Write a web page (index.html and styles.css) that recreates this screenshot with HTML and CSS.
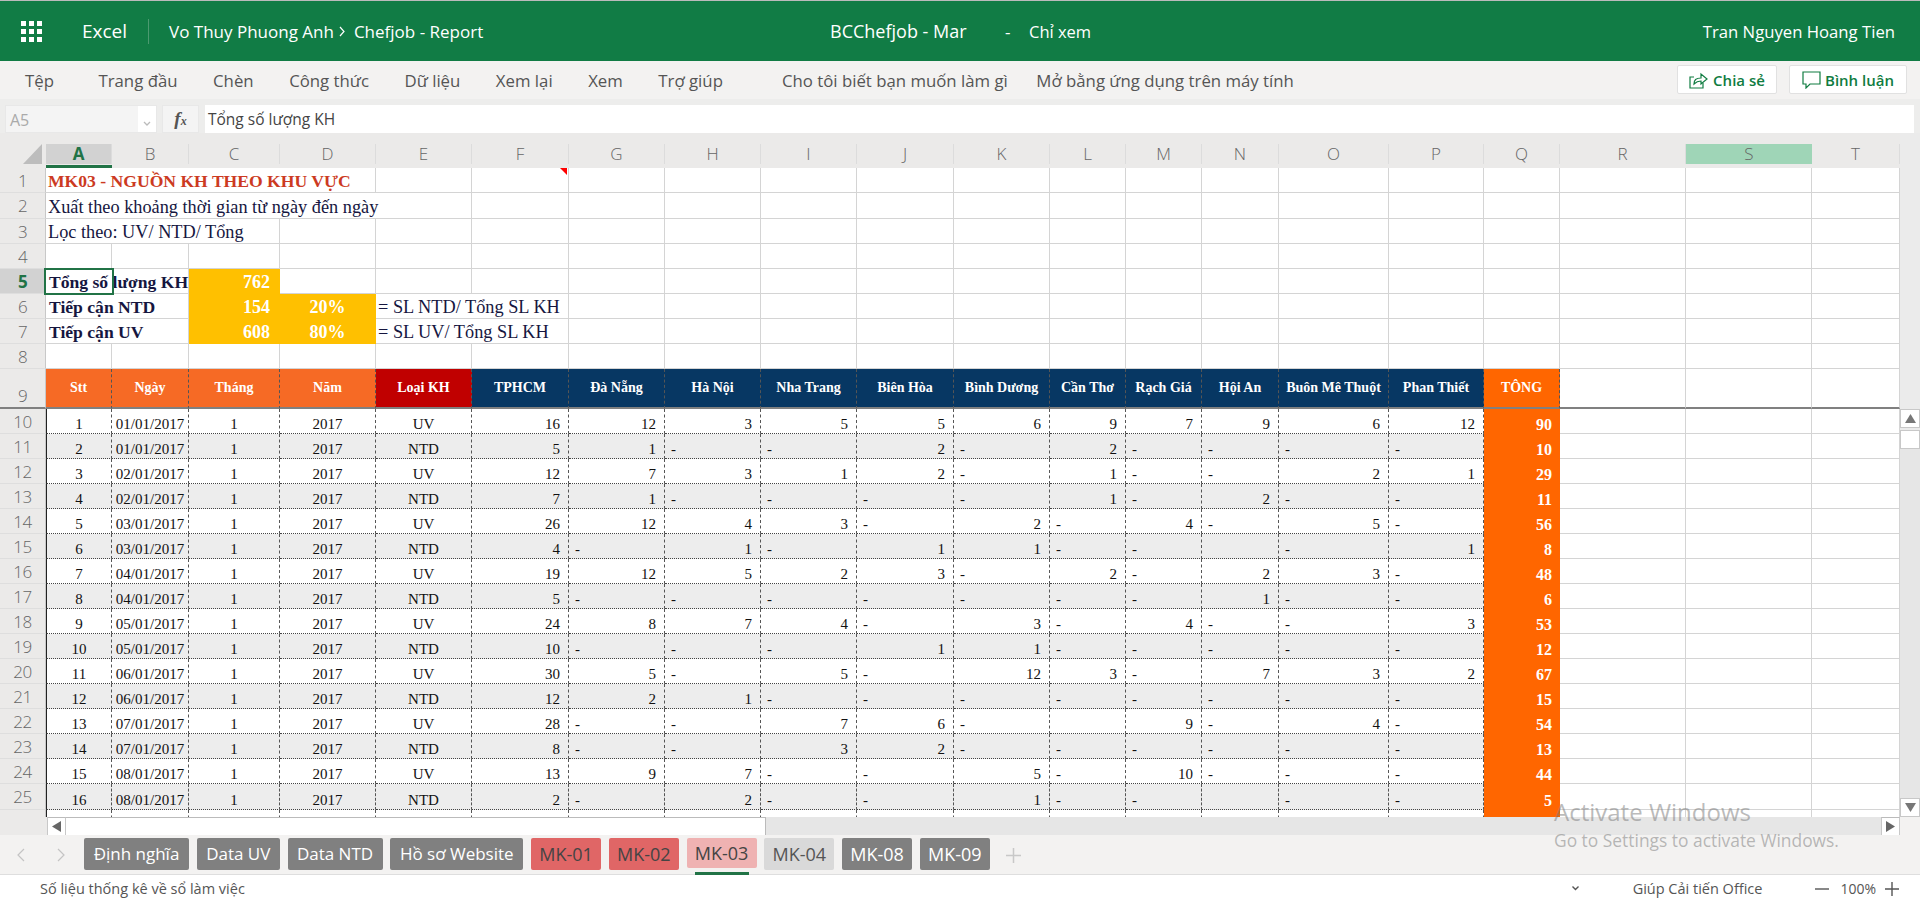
FILE: index.html
```html
<!DOCTYPE html>
<html lang="vi">
<head>
  <meta charset="UTF-8">
  <title>BCChefjob - Mar</title>
  <link rel="stylesheet" href="styles.css">
</head>
<body>
  <header class="titlebar">
    <svg class="waffle" width="21" height="21" viewBox="0 0 21 21" fill="#fff">
      <rect x="0" y="0" width="5" height="5"/><rect x="8" y="0" width="5" height="5"/><rect x="16" y="0" width="5" height="5"/>
      <rect x="0" y="8" width="5" height="5"/><rect x="8" y="8" width="5" height="5"/><rect x="16" y="8" width="5" height="5"/>
      <rect x="0" y="16" width="5" height="5"/><rect x="8" y="16" width="5" height="5"/><rect x="16" y="16" width="5" height="5"/>
    </svg>
    <span class="app-name">Excel</span>
    <span class="crumbs">Vo Thuy Phuong Anh</span>
    <svg class="crumb-sep" width="7" height="11" viewBox="0 0 7 11" fill="none" stroke="#fff" stroke-width="1.2"><path d="M1 1l4 4.5L1 10"/></svg>
    <span class="crumbs">Chefjob - Report</span>
    <span class="doc-name">BCChefjob - Mar</span>
    <span class="doc-dash">-</span>
    <span class="doc-mode">Chỉ xem</span>
    <span class="user-name">Tran Nguyen Hoang Tien</span>
  </header>

  <nav class="ribbon">
    <span class="tab-tep">Tệp</span>
    <span>Trang đầu</span>
    <span>Chèn</span>
    <span>Công thức</span>
    <span>Dữ liệu</span>
    <span>Xem lại</span>
    <span>Xem</span>
    <span class="tab-help">Trợ giúp</span>
    <span class="tab-tell">Cho tôi biết bạn muốn làm gì</span>
    <span>Mở bằng ứng dụng trên máy tính</span>
    <button class="rb-btn btn-share">
      <svg width="20" height="18" viewBox="0 0 20 18" fill="none" stroke="#107c41" stroke-width="1.2"><path d="M5 6H1v11h13v-5"/><path d="M5 13c0-4 2-6 7-6V3l6 5-6 5V10c-3 0-5 1-7 3z"/></svg>
      Chia sẻ
    </button>
    <button class="rb-btn btn-comment">
      <svg width="19" height="18" viewBox="0 0 19 18" fill="none" stroke="#107c41" stroke-width="1.2"><path d="M1 1h17v12H8l-4 4v-4H1z"/></svg>
      Bình luận
    </button>
  </nav>

  <div class="formula-bar">
    <div class="name-box"><span>A5</span><span class="name-drop"><svg width="8" height="5" viewBox="0 0 8 5" fill="none" stroke="#bbb" stroke-width="1.3"><path d="M1 1l3 3 3-3"/></svg></span></div>
    <div class="fx-box"><i>f</i><i class="fx-x">x</i></div>
    <div class="formula-input">Tổng số lượng KH</div>
  </div>

  <div class="sheet-row">
    <div class="sheet-wrap">
      <table class="sheet">
        <colgroup>
          <col class="c-rh"><col class="c66"><col class="c77"><col class="c91"><col class="c96"><col class="c96"><col class="c97"><col class="c96"><col class="c96"><col class="c96"><col class="c97"><col class="c96"><col class="c76"><col class="c76"><col class="c77"><col class="c110"><col class="c95"><col class="c76"><col class="c126"><col class="c126"><col class="c88">
        </colgroup>
        <thead>
          <tr class="r-cols">
            <th class="corner"><svg width="19" height="20" viewBox="0 0 19 20"><path d="M19 0v20H0z" fill="#bdbdbd"/></svg></th>
            <th class="col-on"><div>A</div></th><th><div>B</div></th><th><div>C</div></th><th><div>D</div></th><th><div>E</div></th><th><div>F</div></th><th><div>G</div></th><th><div>H</div></th><th><div>I</div></th><th><div>J</div></th><th><div>K</div></th><th><div>L</div></th><th><div>M</div></th><th><div>N</div></th><th><div>O</div></th><th><div>P</div></th><th><div>Q</div></th><th><div>R</div></th><th class="col-hover"><div>S</div></th><th><div>T</div></th>
          </tr>
        </thead>
        <tbody>
          <tr class="r-top">
            <th class="rh">1</th><td colspan="4" class="title-cell">MK03 - NGUỒN KH THEO KHU VỰC</td><td></td><td class="has-note"><span class="note-mark"></span></td><td></td><td></td><td></td><td></td><td></td><td></td><td></td><td></td><td></td><td></td><td></td><td></td><td></td><td></td>
          </tr>
          <tr class="r-top r26">
            <th class="rh">2</th><td colspan="5" class="note-text">Xuất theo khoảng thời gian từ ngày đến ngày</td><td></td><td></td><td></td><td></td><td></td><td></td><td></td><td></td><td></td><td></td><td></td><td></td><td></td><td></td><td></td>
          </tr>
          <tr class="r-top">
            <th class="rh">3</th><td colspan="3" class="note-text">Lọc theo: UV/ NTD/ Tổng</td><td></td><td></td><td></td><td></td><td></td><td></td><td></td><td></td><td></td><td></td><td></td><td></td><td></td><td></td><td></td><td></td><td></td>
          </tr>
          <tr class="r-top">
            <th class="rh">4</th><td></td><td></td><td></td><td></td><td></td><td></td><td></td><td></td><td></td><td></td><td></td><td></td><td></td><td></td><td></td><td></td><td></td><td></td><td></td><td></td>
          </tr>
          <tr class="r-top">
            <th class="rh rh-on">5</th><td colspan="2" class="sum-label sel-host"><span class="sel-box"></span>Tổng số lượng KH</td><td class="sum-num">762</td><td></td><td></td><td></td><td></td><td></td><td></td><td></td><td></td><td></td><td></td><td></td><td></td><td></td><td></td><td></td><td></td><td></td>
          </tr>
          <tr class="r-top">
            <th class="rh">6</th><td colspan="2" class="sum-label">Tiếp cận NTD</td><td class="sum-num">154</td><td class="sum-pct">20%</td><td colspan="2" class="note-text">= SL NTD/ Tổng SL KH</td><td></td><td></td><td></td><td></td><td></td><td></td><td></td><td></td><td></td><td></td><td></td><td></td><td></td><td></td>
          </tr>
          <tr class="r-top">
            <th class="rh">7</th><td colspan="2" class="sum-label">Tiếp cận UV</td><td class="sum-num">608</td><td class="sum-pct">80%</td><td colspan="2" class="note-text">= SL UV/ Tổng SL KH</td><td></td><td></td><td></td><td></td><td></td><td></td><td></td><td></td><td></td><td></td><td></td><td></td><td></td><td></td>
          </tr>
          <tr class="r-top">
            <th class="rh">8</th><td></td><td></td><td></td><td></td><td></td><td></td><td></td><td></td><td></td><td></td><td></td><td></td><td></td><td></td><td></td><td></td><td></td><td></td><td></td><td></td>
          </tr>
          <tr class="r-head">
            <th class="rh">9</th><td class="h-orange">Stt</td><td class="h-orange">Ngày</td><td class="h-orange">Tháng</td><td class="h-orange">Năm</td><td class="h-red">Loại KH</td><td class="h-navy">TPHCM</td><td class="h-navy">Đà Nẵng</td><td class="h-navy">Hà Nội</td><td class="h-navy">Nha Trang</td><td class="h-navy">Biên Hòa</td><td class="h-navy">Bình Dương</td><td class="h-navy">Cần Thơ</td><td class="h-navy">Rạch Giá</td><td class="h-navy">Hội An</td><td class="h-navy">Buôn Mê Thuột</td><td class="h-navy">Phan Thiết</td><td class="h-total">TÔNG</td><td></td><td></td><td></td>
          </tr>
          <tr class="r-data">
            <th class="rh">10</th><td class="c first">1</td><td class="c">01/01/2017</td><td class="c">1</td><td class="c">2017</td><td class="c">UV</td><td class="n">16</td><td class="n">12</td><td class="n">3</td><td class="n">5</td><td class="n">5</td><td class="n">6</td><td class="n">9</td><td class="n">7</td><td class="n">9</td><td class="n">6</td><td class="n">12</td><td class="t">90</td><td></td><td></td><td></td>
          </tr>
          <tr class="r-data alt">
            <th class="rh">11</th><td class="c first">2</td><td class="c">01/01/2017</td><td class="c">1</td><td class="c">2017</td><td class="c">NTD</td><td class="n">5</td><td class="n">1</td><td class="d">-</td><td class="d">-</td><td class="n">2</td><td class="d">-</td><td class="n">2</td><td class="d">-</td><td class="d">-</td><td class="d">-</td><td class="d">-</td><td class="t">10</td><td></td><td></td><td></td>
          </tr>
          <tr class="r-data">
            <th class="rh">12</th><td class="c first">3</td><td class="c">02/01/2017</td><td class="c">1</td><td class="c">2017</td><td class="c">UV</td><td class="n">12</td><td class="n">7</td><td class="n">3</td><td class="n">1</td><td class="n">2</td><td class="d">-</td><td class="n">1</td><td class="d">-</td><td class="d">-</td><td class="n">2</td><td class="n">1</td><td class="t">29</td><td></td><td></td><td></td>
          </tr>
          <tr class="r-data alt">
            <th class="rh">13</th><td class="c first">4</td><td class="c">02/01/2017</td><td class="c">1</td><td class="c">2017</td><td class="c">NTD</td><td class="n">7</td><td class="n">1</td><td class="d">-</td><td class="d">-</td><td class="d">-</td><td class="d">-</td><td class="n">1</td><td class="d">-</td><td class="n">2</td><td class="d">-</td><td class="d">-</td><td class="t">11</td><td></td><td></td><td></td>
          </tr>
          <tr class="r-data">
            <th class="rh">14</th><td class="c first">5</td><td class="c">03/01/2017</td><td class="c">1</td><td class="c">2017</td><td class="c">UV</td><td class="n">26</td><td class="n">12</td><td class="n">4</td><td class="n">3</td><td class="d">-</td><td class="n">2</td><td class="d">-</td><td class="n">4</td><td class="d">-</td><td class="n">5</td><td class="d">-</td><td class="t">56</td><td></td><td></td><td></td>
          </tr>
          <tr class="r-data alt">
            <th class="rh">15</th><td class="c first">6</td><td class="c">03/01/2017</td><td class="c">1</td><td class="c">2017</td><td class="c">NTD</td><td class="n">4</td><td class="d">-</td><td class="n">1</td><td class="d">-</td><td class="n">1</td><td class="n">1</td><td class="d">-</td><td class="d">-</td><td class="d"></td><td class="d">-</td><td class="n">1</td><td class="t">8</td><td></td><td></td><td></td>
          </tr>
          <tr class="r-data">
            <th class="rh">16</th><td class="c first">7</td><td class="c">04/01/2017</td><td class="c">1</td><td class="c">2017</td><td class="c">UV</td><td class="n">19</td><td class="n">12</td><td class="n">5</td><td class="n">2</td><td class="n">3</td><td class="d">-</td><td class="n">2</td><td class="d">-</td><td class="n">2</td><td class="n">3</td><td class="d">-</td><td class="t">48</td><td></td><td></td><td></td>
          </tr>
          <tr class="r-data alt">
            <th class="rh">17</th><td class="c first">8</td><td class="c">04/01/2017</td><td class="c">1</td><td class="c">2017</td><td class="c">NTD</td><td class="n">5</td><td class="d">-</td><td class="d">-</td><td class="d">-</td><td class="d">-</td><td class="d">-</td><td class="d">-</td><td class="d">-</td><td class="n">1</td><td class="d">-</td><td class="d">-</td><td class="t">6</td><td></td><td></td><td></td>
          </tr>
          <tr class="r-data">
            <th class="rh">18</th><td class="c first">9</td><td class="c">05/01/2017</td><td class="c">1</td><td class="c">2017</td><td class="c">UV</td><td class="n">24</td><td class="n">8</td><td class="n">7</td><td class="n">4</td><td class="d">-</td><td class="n">3</td><td class="d">-</td><td class="n">4</td><td class="d">-</td><td class="d">-</td><td class="n">3</td><td class="t">53</td><td></td><td></td><td></td>
          </tr>
          <tr class="r-data alt">
            <th class="rh">19</th><td class="c first">10</td><td class="c">05/01/2017</td><td class="c">1</td><td class="c">2017</td><td class="c">NTD</td><td class="n">10</td><td class="d">-</td><td class="d">-</td><td class="d">-</td><td class="n">1</td><td class="n">1</td><td class="d">-</td><td class="d">-</td><td class="d">-</td><td class="d">-</td><td class="d">-</td><td class="t">12</td><td></td><td></td><td></td>
          </tr>
          <tr class="r-data">
            <th class="rh">20</th><td class="c first">11</td><td class="c">06/01/2017</td><td class="c">1</td><td class="c">2017</td><td class="c">UV</td><td class="n">30</td><td class="n">5</td><td class="d">-</td><td class="n">5</td><td class="d">-</td><td class="n">12</td><td class="n">3</td><td class="d">-</td><td class="n">7</td><td class="n">3</td><td class="n">2</td><td class="t">67</td><td></td><td></td><td></td>
          </tr>
          <tr class="r-data alt">
            <th class="rh">21</th><td class="c first">12</td><td class="c">06/01/2017</td><td class="c">1</td><td class="c">2017</td><td class="c">NTD</td><td class="n">12</td><td class="n">2</td><td class="n">1</td><td class="d">-</td><td class="d">-</td><td class="d">-</td><td class="d">-</td><td class="d">-</td><td class="d">-</td><td class="d">-</td><td class="d">-</td><td class="t">15</td><td></td><td></td><td></td>
          </tr>
          <tr class="r-data">
            <th class="rh">22</th><td class="c first">13</td><td class="c">07/01/2017</td><td class="c">1</td><td class="c">2017</td><td class="c">UV</td><td class="n">28</td><td class="d">-</td><td class="d">-</td><td class="n">7</td><td class="n">6</td><td class="d">-</td><td class="d"></td><td class="n">9</td><td class="d">-</td><td class="n">4</td><td class="d">-</td><td class="t">54</td><td></td><td></td><td></td>
          </tr>
          <tr class="r-data alt">
            <th class="rh">23</th><td class="c first">14</td><td class="c">07/01/2017</td><td class="c">1</td><td class="c">2017</td><td class="c">NTD</td><td class="n">8</td><td class="d">-</td><td class="d">-</td><td class="n">3</td><td class="n">2</td><td class="d">-</td><td class="d">-</td><td class="d">-</td><td class="d">-</td><td class="d">-</td><td class="d">-</td><td class="t">13</td><td></td><td></td><td></td>
          </tr>
          <tr class="r-data">
            <th class="rh">24</th><td class="c first">15</td><td class="c">08/01/2017</td><td class="c">1</td><td class="c">2017</td><td class="c">UV</td><td class="n">13</td><td class="n">9</td><td class="n">7</td><td class="d">-</td><td class="d">-</td><td class="n">5</td><td class="d">-</td><td class="n">10</td><td class="d">-</td><td class="d">-</td><td class="d">-</td><td class="t">44</td><td></td><td></td><td></td>
          </tr>
          <tr class="r-data alt r26">
            <th class="rh">25</th><td class="c first">16</td><td class="c">08/01/2017</td><td class="c">1</td><td class="c">2017</td><td class="c">NTD</td><td class="n">2</td><td class="d">-</td><td class="n">2</td><td class="d">-</td><td class="d">-</td><td class="n">1</td><td class="d">-</td><td class="d">-</td><td class="d"></td><td class="d">-</td><td class="d">-</td><td class="t">5</td><td></td><td></td><td></td>
          </tr>
          <tr class="r-data r-cut">
            <th class="rh"></th><td class="c first"></td><td class="c"></td><td class="c"></td><td class="c"></td><td class="c"></td><td class="n"></td><td class="n"></td><td class="n"></td><td class="n"></td><td class="n"></td><td class="n"></td><td class="n"></td><td class="n"></td><td class="n"></td><td class="n"></td><td class="n"></td><td class="t"></td><td></td><td></td><td></td>
          </tr>
        </tbody>
      </table>
    </div>
    <div class="vscroll">
      <div class="vs-top"></div>
      <div class="sb-btn"><svg width="11" height="9" viewBox="0 0 11 9"><path d="M5.5 0L11 9H0z" fill="#777"/></svg></div>
      <div class="sb-btn vs-thumb"></div>
      <div class="vs-fill"></div>
      <div class="sb-btn"><svg width="11" height="9" viewBox="0 0 11 9"><path d="M0 0h11L5.5 9z" fill="#777"/></svg></div>
    </div>
  </div>

  <div class="hscroll">
    <div class="hs-corner"></div>
    <div class="hs-btn"><svg width="9" height="11" viewBox="0 0 9 11"><path d="M9 0v11L0 5.5z" fill="#666"/></svg></div>
    <div class="hs-thumb"></div>
    <div class="hs-fill"></div>
    <div class="hs-btn"><svg width="9" height="11" viewBox="0 0 9 11"><path d="M0 0l9 5.5L0 11z" fill="#666"/></svg></div>
    <div class="hs-end"></div>
  </div>

  <div class="tabbar">
    <svg class="tab-nav" width="8" height="14" viewBox="0 0 8 14" fill="none" stroke="#c4c4c4" stroke-width="1.2"><path d="M7 1L1 7l6 6"/></svg>
    <svg class="tab-nav tab-nav-next" width="8" height="14" viewBox="0 0 8 14" fill="none" stroke="#c4c4c4" stroke-width="1.2"><path d="M1 1l6 6-6 6"/></svg>
    <span class="stab gray w105">Định nghĩa</span>
    <span class="stab gray w83">Data UV</span>
    <span class="stab gray w95">Data NTD</span>
    <span class="stab gray w133">Hồ sơ Website</span>
    <span class="stab red">MK-01</span>
    <span class="stab red">MK-02</span>
    <span class="stab pink">MK-03</span>
    <span class="stab light">MK-04</span>
    <span class="stab gray">MK-08</span>
    <span class="stab gray">MK-09</span>
    <svg class="tab-add" width="15" height="15" viewBox="0 0 15 15" stroke="#c8c8c8" stroke-width="1.5"><path d="M7.5 0v15M0 7.5h15"/></svg>
  </div>

  <footer class="statusbar">
    <span class="st-left">Số liệu thống kê về sổ làm việc</span>
    <svg class="st-chev" width="7" height="5" viewBox="0 0 7 5" fill="none" stroke="#555" stroke-width="1.4"><path d="M.5.5l3 3 3-3"/></svg>
    <span class="st-help">Giúp Cải tiến Office</span>
    <svg class="st-minus" width="14" height="2" viewBox="0 0 14 2"><path d="M0 1h14" stroke="#555" stroke-width="1.4"/></svg>
    <span class="st-zoom">100%</span>
    <svg class="st-plus" width="14" height="14" viewBox="0 0 14 14" stroke="#555" stroke-width="1.4"><path d="M7 0v14M0 7h14"/></svg>
  </footer>

  <div class="activate">
    <div class="act-big">Activate Windows</div>
    <div class="act-small">Go to Settings to activate Windows.</div>
  </div>
</body>
</html>
```

FILE: styles.css
```css
* {
  box-sizing: border-box;
}
html, body {
  margin: 0;
  height: 902px;
  overflow: hidden;
}
body {
  display: flex;
  flex-direction: column;
  position: relative;
  width: 1920px;
  font-family: "Open Sans", "Noto Sans", sans-serif;
  background: #fff;
}

/* title bar */
.titlebar {
  height: 61px;
  flex: none;
  display: flex;
  align-items: center;
  color: #fff;
  background: #117c45;
  border-top: 1px solid #bbb;
  font-size: 17px;
  white-space: nowrap;
}
.waffle {
  margin-left: 21px;
}
.app-name {
  margin-left: 40px;
  width: 67px;
  height: 25px;
  line-height: 25px;
  font-size: 19px;
  border-right: 1px solid #4b9a70;
}
.crumbs {
  margin-left: 20px;
}
.crumb-sep {
  margin-left: 5px;
  margin-right: -12px;
}
.doc-name {
  position: absolute;
  left: 830px;
  font-size: 18px;
}
.doc-dash {
  position: absolute;
  left: 1005px;
}
.doc-mode {
  position: absolute;
  left: 1029px;
  font-size: 16.5px;
}
.user-name {
  margin-left: auto;
  margin-right: 25px;
  font-size: 16.7px;
}

/* ribbon */
.ribbon {
  height: 38px;
  flex: none;
  display: flex;
  align-items: center;
  gap: 35.5px;
  padding-left: 25px;
  background: #f3f2f1;
  color: #555;
  font-size: 16.8px;
  white-space: nowrap;
}
.tab-tep {
  margin-right: 9px;
}
.tab-help {
  margin-right: 23.5px;
}
.tab-tell {
  margin-right: -7px;
}
.rb-btn {
  display: flex;
  align-items: center;
  justify-content: center;
  gap: 4px;
  height: 29px;
  padding: 0;
  background: #fff;
  border: 1px solid #e1e1e1;
  border-radius: 2px;
  color: #107c41;
  font: 600 15px "Open Sans", sans-serif;
}
.btn-share {
  position: absolute;
  left: 1677px;
  top: 65px;
  width: 100px;
}
.btn-comment {
  position: absolute;
  left: 1789px;
  top: 65px;
  width: 118px;
}

/* formula bar */
.formula-bar {
  height: 34px;
  flex: none;
  display: flex;
  padding: 6px 6px 0 5px;
  background: #ededec;
  font-size: 15.5px;
}
.name-box {
  width: 152px;
  height: 28px;
  display: flex;
  line-height: 28px;
  padding-left: 4px;
  color: #aaa;
  background: #f4f4f4;
  border: 1px solid #e8e8e8;
}
.name-box span:first-child {
  flex: 1;
  font-size: 16px;
}
.name-drop {
  width: 18px;
  background: #fff;
  text-align: center;
}
.fx-box {
  width: 37px;
  height: 28px;
  margin-left: 5px;
  text-align: center;
  color: #555;
  background: #f4f4f4;
  border: 1px solid #e8e8e8;
  font: italic bold 19px/26px "Liberation Serif", serif;
}
.fx-x {
  font-size: 12px;
}
.formula-input {
  flex: 1;
  height: 28px;
  margin-left: 6px;
  padding-left: 3px;
  line-height: 29px;
  color: #444;
  background: #fff;
}

/* sheet */
.sheet-row {
  height: 684px;
  flex: none;
  display: flex;
}
.sheet-wrap {
  width: 1900px;
  height: 684px;
  overflow: hidden;
}
.sheet {
  width: 1900px;
  table-layout: fixed;
  border-collapse: separate;
  border-spacing: 0;
  font-family: "Liberation Serif", serif;
}
.c-rh { width: 46px; }
.c66 { width: 66px; }
.c76 { width: 76px; }
.c77 { width: 77px; }
.c88 { width: 88px; }
.c91 { width: 91px; }
.c95 { width: 95px; }
.c96 { width: 96px; }
.c97 { width: 97px; }
.c110 { width: 110px; }
.c126 { width: 126px; }

/* column letters */
.r-cols th {
  height: 35px;
  padding: 11px 0 0;
  vertical-align: top;
  background: #ebeae9;
  color: #666;
  font: 300 17px "Open Sans", sans-serif;
}
.r-cols th div {
  height: 20px;
  line-height: 20px;
  border-right: 1px solid #dcdcdc;
}
.r-cols .corner {
  padding: 11px 4px 0 23px;
  line-height: 0;
}
.r-cols .col-on {
  border-bottom: 3px solid #217346;
  color: #217346;
  font-weight: 700;
}
.r-cols .col-on div {
  background: #d2d2d2;
}
.r-cols .col-hover div {
  background: #9fd5b7;
  border-right: 0;
}

/* rows */
td {
  padding: 0;
  height: 25px;
  line-height: 18px;
  vertical-align: bottom;
  white-space: nowrap;
  border-right: 1px solid #d4d4d4;
  border-bottom: 1px solid #d4d4d4;
}
.rh {
  height: 25px;
  padding: 0;
  text-align: center;
  vertical-align: middle;
  background: #ebeae9;
  color: #666;
  letter-spacing: -0.5px;
  border-right: 1px solid #c8c8c8;
  border-bottom: 1px solid #dedede;
  font: 300 17px "Open Sans", sans-serif;
}
.rh-on {
  background: #d2d2d2;
  color: #217346;
  font-weight: 700;
}
.r-top td {
  padding-bottom: 2px;
  color: #16163f;
  font-size: 18.3px;
}
.r26 td, .r26 .rh {
  height: 26px;
}
.r-top .title-cell {
  padding-left: 2px;
  font-size: 17.6px;
  font-weight: 700;
  color: #cc3a22;
}
.note-text {
  padding-left: 2px;
}
.has-note {
  position: relative;
}
.note-mark {
  position: absolute;
  top: 0;
  right: 1px;
  border-style: solid;
  border-width: 0 7px 7px 0;
  border-color: transparent #f00 transparent transparent;
}
.r-top .sum-label {
  padding-left: 3px;
  font-size: 17.6px;
  font-weight: 700;
}
.sel-host {
  position: relative;
}
.sel-box {
  position: absolute;
  left: -2px;
  top: -1px;
  width: 70px;
  height: 27px;
  border: 2px solid #217346;
}
.r-top .sum-num, .r-top .sum-pct {
  font-size: 18px;
  font-weight: 700;
  color: #fff;
  background: #ffc000;
  border-right-color: #ffc000;
  border-bottom-color: #ffc000;
}
.r-top .sum-num {
  padding-right: 9px;
  text-align: right;
}
.r-top .sum-pct {
  text-align: center;
}

/* table header row */
.r-head td, .r-head .rh {
  height: 40px;
  border-bottom: 2px solid #808080;
}
.r-head .rh {
  vertical-align: bottom;
}
.r-head td[class] {
  vertical-align: middle;
  text-align: center;
  color: #fff;
  font-size: 14px;
  font-weight: 700;
  border-right: 1px dashed #555;
}
.h-orange { background: #f66a25; }
.h-red { background: #c00000; }
.h-navy { background: #073763; }
.r-head .h-total {
  background: #ff6600;
  border-right: 0;
}

/* data rows */
.r-data .c, .r-data .n, .r-data .d {
  font-size: 15px;
  color: #111;
  border-right: 1px dashed #555;
  border-bottom: 1px dotted #444;
}
.r-data .c {
  text-align: center;
}
.r-data .n {
  padding-right: 8px;
  text-align: right;
}
.r-data .d {
  padding-left: 6px;
}
.r-data .first {
  border-left: 1px solid #222;
}
.alt .c, .alt .n, .alt .d {
  background: #ededed;
}
.r-data .t {
  padding-right: 8px;
  text-align: right;
  font-size: 16px;
  font-weight: 700;
  color: #fff;
  background: #ff6600;
  border-right: 0;
  border-bottom: 0;
}
.r-cut .c, .r-cut .n {
  border-bottom: 0;
}

/* scrollbars */
.vscroll {
  width: 20px;
  display: flex;
  flex-direction: column;
  background: #ebebeb;
}
.vs-top {
  height: 276px;
}
.sb-btn {
  width: 20px;
  height: 19px;
  display: flex;
  align-items: center;
  justify-content: center;
  background: #fff;
  border: 1px solid #c8c8c8;
}
.vs-thumb {
  margin-top: 2px;
}
.vs-fill {
  flex: 1;
  background: #e6e6e6;
}
.hscroll {
  height: 18px;
  flex: none;
  display: flex;
}
.hs-corner {
  width: 47px;
  background: #ebeae9;
}
.hs-btn {
  width: 19px;
  display: flex;
  align-items: center;
  justify-content: center;
  background: #fff;
  border-left: 1px solid #c8c8c8;
  border-right: 1px solid #c8c8c8;
  border-top: 1px solid #bbb;
}
.hs-thumb {
  width: 700px;
  background: #fff;
  border-right: 1px solid #bbb;
  border-top: 1px solid #bbb;
}
.hs-fill {
  flex: 1;
  background: #e6e6e6;
}
.hs-end {
  width: 20px;
  background: #f3f2f1;
}

/* sheet tabs */
.tabbar {
  height: 40px;
  flex: none;
  display: flex;
  align-items: flex-start;
  gap: 7.75px;
  padding: 3px 0 0 84px;
  position: relative;
  background: #f3f2f1;
  border-bottom: 1px solid #dedede;
}
.tab-nav {
  position: absolute;
  left: 17px;
  top: 13px;
}
.tab-nav-next {
  left: 57px;
}
.stab {
  width: 70px;
  height: 32px;
  line-height: 32px;
  text-align: center;
  border-radius: 2px;
  font-size: 18px;
  white-space: nowrap;
}
.w83, .w95, .w105, .w133 {
  font-size: 17px;
}
.w83 { width: 83px; }
.w95 { width: 95px; }
.w105 { width: 105px; }
.w133 { width: 133px; }
.gray {
  background: #808080;
  color: #fff;
}
.red {
  background: #e06666;
  color: #444;
}
.pink {
  position: relative;
  height: 30px;
  line-height: 30px;
  background: #efb2b2;
  color: #444;
}
.pink::after {
  content: "";
  position: absolute;
  left: 8px;
  right: 8px;
  top: 34px;
  height: 3px;
  background: #217346;
}
.light {
  background: #d9d9d9;
  color: #555;
}
.tab-add {
  margin: 10px 0 0 8px;
}

/* status bar */
.statusbar {
  flex: 1;
  display: flex;
  align-items: center;
  color: #555;
  font-size: 14.5px;
  white-space: nowrap;
}
.st-left {
  margin-left: 40px;
}
.st-chev {
  margin-left: auto;
}
.st-help {
  margin-left: 54px;
}
.st-minus {
  margin-left: 53px;
}
.st-zoom {
  margin-left: 11px;
  font-size: 14px;
}
.st-plus {
  margin: 0 21px 0 9px;
}

/* windows watermark */
.activate {
  position: absolute;
  left: 1554px;
  top: 796px;
  color: rgba(120, 120, 120, 0.5);
  white-space: nowrap;
  pointer-events: none;
}
.act-big {
  height: 32px;
  line-height: 32px;
  font-size: 24px;
}
.act-small {
  font-size: 17.4px;
}
```
